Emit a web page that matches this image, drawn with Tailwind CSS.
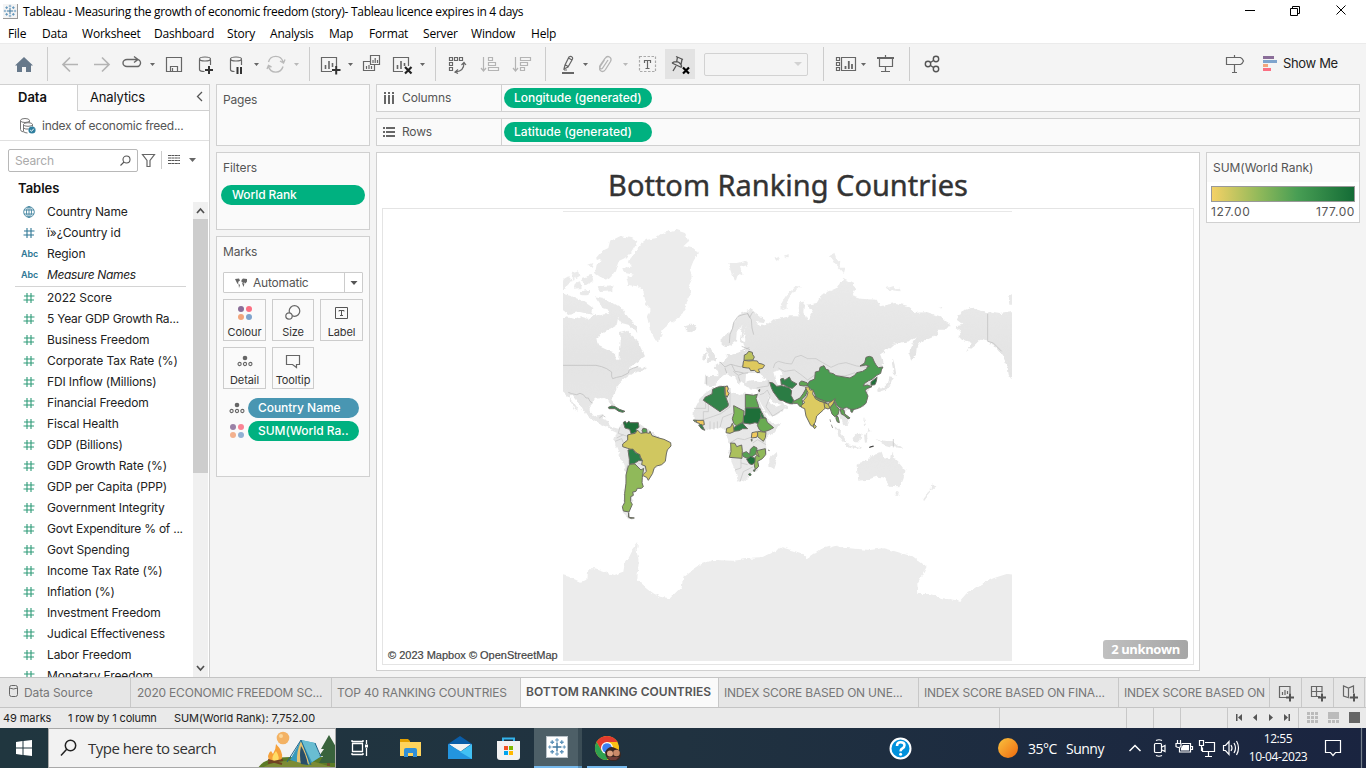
<!DOCTYPE html>
<html lang="en">
<head>
<meta charset="utf-8">
<title>Tableau</title>
<script src="https://cdn.jsdelivr.net/npm/@tailwindcss/browser@4"></script>
</head>
<body class="w-[1366px] h-[768px] overflow-hidden bg-[#f4f4f4] font-['Inter',sans-serif] text-[12px] text-[#333] flex flex-col whitespace-nowrap">
<svg class="hidden">
  <symbol id="hash" viewBox="0 0 12 12"><path d="M4 1v10M8 1v10M1 4h10.500M.5 8h10.500" fill="none" stroke="currentColor" stroke-width="1.100"/></symbol>
  <symbol id="globe" viewBox="0 0 12 12"><g fill="none" stroke="currentColor" stroke-width=".8"><circle cx="6" cy="6" r="5.300"/><ellipse cx="6" cy="6" rx="2.500" ry="5.300"/><path d="M6 .7v10.600M1 4h10M1 8h10"/></g></symbol>
  <symbol id="tab" viewBox="0 0 18 18"><path d="M9 5v8M5 9h8" stroke="#3f78a0" stroke-width="1.300"/><path d="M9 1v3.500M7.300 2.700h3.400M9 13.500V17M7.300 15.300h3.400M1 9h3M2.500 7.500v3M14 9h3M15.500 7.500v3" stroke="#5e93ba" stroke-width=".9"/><path d="M4.700 3v3.400M3 4.700h3.400M13.300 3v3.400M11.600 4.700H15M4.700 11.600V15M3 13.300h3.400M13.300 11.600V15M11.600 13.300H15" stroke="#5e93ba" stroke-width="1.200"/></symbol>
  <symbol id="dots4" viewBox="0 0 16 16"><circle cx="4" cy="4" r="3" fill="#8a6d98"/><circle cx="12" cy="4" r="3" fill="#fb6f82"/><circle cx="4" cy="12" r="3" fill="#f2a57c"/><circle cx="12" cy="12" r="3" fill="#7fa4cd"/></symbol>
  <symbol id="detail" viewBox="0 0 16 12"><circle cx="8" cy="3" r="2.300" fill="#666"/><g fill="none" stroke="#666" stroke-width="1.100"><circle cx="2.600" cy="9" r="1.600"/><circle cx="8" cy="9" r="1.600"/><circle cx="13.400" cy="9" r="1.600"/></g></symbol>
</svg>

<!-- title bar -->
<header class="h-[22px] bg-white flex items-center pl-[3px] text-black font-['Open_Sans',sans-serif]">
  <div class="size-[15px] mt-px bg-[#f4f4f4] border-r border-b border-[#999]"><svg class="size-[14px]"><use href="#tab"/></svg></div>
  <div class="pl-[5px] pt-[2px] tracking-[-0.3px]">Tableau - Measuring the growth of economic freedom (story)- Tableau licence expires in 4 days</div>
  <svg class="ml-auto w-[140px] h-[22px]" viewBox="1226 0 140 22" fill="none" stroke="#000"><path d="M1245 10.500h10M1290.500 8.500h7v7h-7zM1292.500 8V6.500h7v7H1298M1336.500 5.500l9 9M1345.500 5.500l-9 9"/></svg>
</header>
<nav class="h-[21px] bg-white flex items-center text-black font-['Open_Sans',sans-serif] tracking-[-0.2px] pl-2 pt-[2px]">
  <span class="w-[34px]">File</span><span class="w-10">Data</span><span class="w-[72px]">Worksheet</span><span class="w-[73px]">Dashboard</span><span class="w-[43px]">Story</span><span class="w-[59px]">Analysis</span><span class="w-10">Map</span><span class="w-[54px]">Format</span><span class="w-12">Server</span><span class="w-[60px]">Window</span><span>Help</span>
</nav>

<!-- toolbar -->
<div class="h-[41px] border-t border-[#ebebeb] flex items-center text-[#666]">
  <svg class="w-[47px] h-10 shrink-0" viewBox="0 44 47 40"><path d="M15 65.500l9-8.500 9 8.500h-2V72h-5v-5h-4v5h-5v-6.500z" fill="#66788a"/></svg>
  <div class="w-px h-[34px] bg-[#ccc]"></div>
  <svg class="w-[261px] h-10 shrink-0" viewBox="48 44 261 40" fill="none" stroke="currentColor" stroke-width="1.200">
    <path stroke="#b4b4b4" stroke-width="1.700" d="M78 64.500H63M70 57.500l-7 7 7 7M94 64.500h15M102 57.500l7 7-7 7"/>
    <path stroke-width="1.400" d="M133 59.500h-6a4 3.500 0 0 0 0 7h9.500a3.500 3.500 0 0 0 1-7H133M134 56.500l4 3-4 3"/>
    <path d="M166.500 57.500h15v14h-15zM170.500 71v-4.500h7V71M172.500 71v-3"/>
    <path d="M199.500 59.500v10q0 2 5 2M210.500 60v5"/><ellipse cx="205" cy="59" rx="5.500" ry="2"/><path stroke="#333" stroke-width="2" d="M205 70h8M209 66v8"/>
    <path d="M230.500 59.500v10q0 2 4 2M241.500 60v5"/><ellipse cx="236" cy="59" rx="5.500" ry="2"/><path stroke="#333" stroke-width="2" d="M237.500 67v7M241 67v7"/>
    <g stroke="#b9b9b9" stroke-width="1.400"><path d="M268.500 62a7.500 7.500 0 0 1 14.500 0M283 66.500a7.500 7.500 0 0 1-14.500 0M280 61l3.500 2 1.500-3.500M271.500 67l-3-1.500-1.500 3.500"/></g>
    <g stroke="none"><path fill="#666" d="M150 63h5l-2.500 3zM254 63h5l-2.500 3z"/><path fill="#b9b9b9" d="M294 63h5l-2.500 3z"/></g>
  </svg>
  <div class="w-px h-[34px] bg-[#ccc]"></div>
  <svg class="w-[125px] h-10 shrink-0" viewBox="310 44 125 40" fill="none" stroke="currentColor" stroke-width="1.200">
    <path d="M332 71.500h-10.500v-14h15V66"/><path stroke-width="1.600" d="M325.500 69v-4M329 69v-8M332.500 67v-4"/><path stroke="#333" stroke-width="2" d="M332 70h8.500M336.200 66v8.500"/>
    <path d="M370.500 55.500h9v9h-9zM370 61.500h-6.500v9h11V65M373 63v-3M375.200 63v-5M377.500 63v-3M366.500 69v-3M369 69v-4M371.500 69v-3"/>
    <path d="M403 71.500h-9.500v-14h15V66"/><path stroke-width="1.600" d="M397.500 69v-4M401 69v-8M404.500 66v-3"/><path stroke="#222" stroke-width="2.200" d="M405 67l6.500 6.500M411.500 67l-6.500 6.500"/>
    <path stroke="none" fill="#666" d="M348 63h5l-2.500 3zM420 63h5l-2.500 3z"/>
  </svg>
  <div class="w-px h-[34px] bg-[#ccc]"></div>
  <svg class="w-[109px] h-10 shrink-0" viewBox="436 44 109 40" fill="none" stroke="currentColor" stroke-width="1.200">
    <path d="M449.500 57.500h3v3h-3zM454.500 57.500h3v3h-3zM459.500 57.500h3v3h-3zM449.500 62.500h3v3h-3zM449.500 67.500h3v3h-3zM464 63q0 8-8 9M461.500 65l2.500-2.500 2 2.500M458 69.500l-3 2.500 3 1.500"/>
    <g stroke="#b4b4b4"><path d="M483.500 57v13M481 68l2.500 3 2.500-3M488.500 57.500h4v3h-4zM488.500 62.500h7v3h-7zM488.500 67.500h10v3h-10zM515.500 57v13M513 68l2.500 3 2.500-3M520.500 57.500h10v3h-10zM520.500 62.500h7v3h-7zM520.500 67.500h4v3h-4z"/></g>
  </svg>
  <div class="w-px h-[34px] bg-[#ccc]"></div>
  <svg class="w-[119px] h-10 shrink-0" viewBox="546 44 119 40" fill="none" stroke="currentColor" stroke-width="1.200">
    <path d="M564 69l1-4L569 57q2-1.500 3.500.5.500 1-.5 2.500L568 67zM565 64.500l3 2M568.500 58l3.500 2M564 70h3"/><path stroke-width="2" d="M562 73h12"/>
    <path stroke="#b4b4b4" stroke-width="1.300" d="M608 60l-5 7.500q-1 2-2.500 1t-.5-3l5-7q2-3 4.500-1.500t1 4.500l-5 8q-2 3-4.500 1.500t-.5-5l4-6"/>
    <g stroke="none"><path fill="#666" d="M583 63h5l-2.500 3z"/><path fill="#b9b9b9" d="M623 63h5l-2.500 3z"/></g>
    <path stroke="#aaa" stroke-dasharray="2.500 1.500" d="M639.500 56.500h16v15h-16z"/><path d="M644.500 63v-2.500h6V63M647.500 60.500v8M645.500 68.500h4"/>
  </svg>
  <div class="w-[30px] h-[30px] bg-[#e3e3e3]"><svg class="w-[30px] h-[30px]" viewBox="665 49 30 30" fill="none" stroke="#555" stroke-width="1.300"><path d="M676 56.500l7 3M677.500 57l-1 5.500M682 59.500l-1 5M672 63q4-2.500 7-.5t2.500 5M672 63l9.500 4.500M676 66l-3 5"/><path stroke="#000" stroke-width="2.200" d="M683 67.500l6 6M689 67.500l-6 6"/></svg></div>
  <div class="ml-[9px] w-[104px] h-[23px] border border-[#d2d2d2] rounded-[2px] flex items-center justify-end pr-[5px]"><svg class="w-2 h-2" viewBox="0 0 8 8"><path d="M0 2h8L4 6z" fill="#d2d2d2"/></svg></div>
  <div class="ml-[15px] w-px h-[34px] bg-[#ccc]"></div>
  <svg class="w-[85px] h-10 shrink-0" viewBox="824 44 85 40" fill="none" stroke="currentColor" stroke-width="1.200">
    <path d="M836.500 57.500h3v3h-3zM836.500 62.500h3v3h-3zM836.500 67.500h3v3h-3zM841.500 57.500h14v13h-14z"/><path stroke-width="1.800" d="M845.500 69v-3M848.800 69v-8M852 69v-5"/><path stroke="none" fill="#666" d="M861 63h5l-2.500 3z"/>
    <path d="M879.500 58v8.500h13V58M885.500 66v5M881 71.500h9M885.500 55v3"/><path stroke-width="2" d="M877 58h17"/>
  </svg>
  <div class="w-px h-[34px] bg-[#ccc]"></div>
  <svg class="w-[50px] h-10 shrink-0" viewBox="910 44 50 40" fill="none" stroke="#555" stroke-width="1.400"><circle cx="928" cy="64" r="2.700"/><circle cx="936" cy="59" r="2.700"/><circle cx="936" cy="69" r="2.700"/><path d="M930.500 62.500l3-2M930.500 65.500l3 2"/></svg>
  <svg class="ml-auto w-[58px] h-10 shrink-0" viewBox="1225 44 58 40" fill="none" stroke="#666" stroke-width="1.200"><path d="M1226.500 57.500h14q2 1 3 3.500-1 2.500-3 3.500h-14zM1234.500 55v2M1234.500 65v7M1232 72.500h5"/><g stroke="none"><path fill="#8a6d98" d="M1263 56h11v3h-11z"/><path fill="#7fa4cd" d="M1263 60h14v3h-14z"/><path fill="#f2a57c" d="M1263 64h5v3h-5z"/><path fill="#fb6f82" d="M1263 68h8v3h-8z"/></g></svg>
  <span class="w-[83px] text-[13px] text-[#222] tracking-[-0.35px]">Show Me</span>
</div>

<!-- workspace -->
<main class="h-[593px] flex overflow-hidden">
  <!-- data pane -->
  <aside class="w-[210px] shrink-0 bg-white border-t border-r border-[#d0d0d0] flex flex-col overflow-hidden">
    <div class="flex h-[26px] shrink-0 text-[13px] text-[#111]">
      <div class="w-[77px] pl-[18px] pt-[3px] font-semibold">Data</div>
      <div class="flex-1 border-l border-b border-[#d0d0d0] bg-[#fafafa] pl-3 pt-[3px] flex justify-between tracking-[-0.15px]">Analytics<svg class="w-2 h-[14px] mr-[6px] mt-[1px]" viewBox="0 0 8 14"><path d="M7 3L2.500 7.500 7 12" fill="none" stroke="#555" stroke-width="1.300"/></svg></div>
    </div>
    <div class="h-[30px] shrink-0 border-b border-[#e0e0e0] flex items-center pl-[19px] text-[#555] tracking-[-0.27px]">
      <svg class="w-[18px] h-[18px] mr-[5px]" viewBox="0 0 18 18" fill="none" stroke="#777"><ellipse cx="6" cy="3.500" rx="4.500" ry="2"/><path d="M1.500 3.500v9q0 2 3 2.500M10.500 3.500v2"/><ellipse cx="9" cy="7.500" rx="4.500" ry="1.800"/><path d="M4.500 7.500V14q0 2 4 2M13.500 7.500v2M4.500 11q2 1.500 5 1"/><circle cx="13" cy="13" r="3.600" fill="#2f7f9f" stroke="none"/><path stroke="#fff" d="M11.200 13l1.300 1.300 2.300-2.600"/></svg>
      index of economic freed...
    </div>
    <div class="flex items-center h-[23px] mt-2 shrink-0 pl-2">
      <div class="w-[130px] h-[23px] border border-[#b8b8b8] rounded-[2px] flex items-center justify-between pl-[6px] pr-[6px] text-[#aaa] tracking-[-0.15px]">Search<svg class="w-[11px] h-[11px]" viewBox="0 0 11 11" fill="none" stroke="#555" stroke-width="1.100"><circle cx="6.500" cy="4.500" r="3.500"/><path d="M4 7L.5 10.500"/></svg></div>
      <svg class="w-[64px] h-[23px]" viewBox="138 149 64 23" fill="none" stroke="#666"><path d="M142.500 154.500h12l-4.500 6v6h-3v-6z" stroke-width="1.200"/><path stroke="#ccc" d="M161.500 151v18"/><path stroke="#555" stroke-dasharray="3 .4" d="M168 155.500h12M168 158h12M168 160.500h12M168 163.500h12"/><path fill="#666" stroke="none" d="M189 158h7l-3.500 4z"/></svg>
    </div>
    <div class="h-[29px] shrink-0 pl-[18px] pt-[7px] text-[13px] font-semibold text-[#111]">Tables</div>
    <div class="flex flex-1 overflow-hidden">
      <div id="fields" class="w-[193px] shrink-0 text-[#222] tracking-[-0.12px]"></div>
      <div class="w-[15px] mt-px bg-[#f0f0f0] flex flex-col items-center">
        <svg class="w-[15px] h-[17px] shrink-0" viewBox="0 0 15 17"><path d="M4 11l3.500-4 3.500 4" fill="none" stroke="#505050" stroke-width="1.700"/></svg>
        <div class="w-[15px] h-[254px] shrink-0 bg-[#cdcdcd]"></div>
        <svg class="w-[15px] h-[17px] mt-auto" viewBox="0 0 15 17"><path d="M4 6l3.500 4L11 6" fill="none" stroke="#505050" stroke-width="1.700"/></svg>
      </div>
    </div>
  </aside>

  <!-- cards -->
  <section class="w-[154px] ml-[6px] shrink-0 flex flex-col gap-[6px] text-[#555]">
    <div class="h-[62px] border border-[#d0d0d0] bg-[#fafafa] pl-[6px] pt-[6px] tracking-[-0.2px]">Pages</div>
    <div class="h-[78px] border border-[#d0d0d0] bg-[#fafafa] pt-[6px]"><div class="pl-[6px] tracking-[-0.1px]">Filters</div><div class="ml-1 mt-[8px] w-[144px] h-5 rounded-full bg-[#00b180] text-white pl-[11px] leading-5 font-medium tracking-[-0.1px]">World Rank</div></div>
    <div class="h-[241px] border border-[#d0d0d0] bg-[#fafafa] pt-[6px] px-[6px]">
      <div class="tracking-[-0.2px]">Marks</div>
      <div class="mt-[11px] w-[140px] h-[21px] border border-[#ccc] rounded-[1px] bg-white flex items-center tracking-[-0.2px]"><svg class="ml-[10px] w-[14px] h-3 mr-[5px]" viewBox="0 0 14 12"><path d="M1 2l4-.5 1 2-2 1.500.5 1-1 1zM4.500 6.500L6 8l-1 3zM7.500 3l1.500-1.500L13 2v2.500l-1.500 2-1-1-1 .5-2-1zM8 6l2.500.5L9.500 10z" fill="#666"/></svg><span class="flex-1">Automatic</span><span class="w-[18px] h-full border-l border-[#ccc] flex items-center justify-center"><svg class="w-2 h-2" viewBox="0 0 8 8"><path d="M.5 2h7L4 6z" fill="#555"/></svg></span></div>
      <div class="mt-[6px] grid grid-cols-[43px_42px_43px] gap-x-[6px] gap-y-[6px] text-[11px] text-[#333] tracking-[-0.1px]">
        <div class="h-[42px] border border-[#ccc] flex flex-col items-center justify-between pt-[5px]"><svg class="size-4"><use href="#dots4"/></svg>Colour</div>
        <div class="h-[42px] border border-[#ccc] flex flex-col items-center justify-between pt-[5px]"><svg class="size-4" viewBox="0 0 16 16" fill="#fafafa" stroke="#666" stroke-width="1.200"><circle cx="9.500" cy="6" r="5.300"/><circle cx="4" cy="11" r="3.200"/></svg>Size</div>
        <div class="h-[42px] border border-[#ccc] flex flex-col items-center justify-between pt-[5px]"><svg class="size-4" viewBox="0 0 16 16" fill="none" stroke="#555"><path d="M1.500 2.500h12v11h-12zM5 6.500v-1h5v1M7.500 5.500v5M6 10.500h3"/></svg>Label</div>
        <div class="h-[42px] border border-[#ccc] flex flex-col items-center justify-between pt-[7px]"><svg class="w-4 h-3"><use href="#detail"/></svg>Detail</div>
        <div class="h-[42px] border border-[#ccc] flex flex-col items-center justify-between pt-[5px]"><svg class="size-4" viewBox="0 0 16 16" fill="none" stroke="#666" stroke-width="1.200"><path d="M1.500 2.500h13v9h-3v3l-4-3h-6z"/></svg>Tooltip</div>
      </div>
      <div class="mt-[9px] flex items-center h-5"><svg class="w-4 h-3 ml-[6px] mr-[3px]"><use href="#detail"/></svg><div class="w-[111px] h-5 rounded-full bg-[#4996b2] text-white pl-[10px] leading-5 font-medium tracking-[-0.05px]">Country Name</div></div>
      <div class="mt-[3px] flex items-center h-5"><svg class="size-4 ml-[6px] mr-[3px] opacity-85"><use href="#dots4"/></svg><div class="w-[111px] h-5 rounded-full bg-[#00b180] text-white pl-[10px] leading-5 font-medium tracking-[-0.03px]">SUM(World Ra..</div></div>
    </div>
  </section>

  <!-- sheet -->
  <section class="ml-[6px] w-[984px] shrink-0 flex flex-col gap-[6px] text-[#555]">
    <div class="h-7 border border-[#d0d0d0] bg-[#fafafa] flex items-center"><svg class="w-3 h-3 ml-[6px] mr-[7px]" viewBox="0 0 12 12"><path d="M1 0h2v2H1zM5 0h2v2H5zM9 0h2v2H9zM1 3h2v9H1zM5 3h2v9H5zM9 3h2v9H9z" fill="#666"/></svg><span class="w-[99px] tracking-[-0.1px]">Columns</span><div class="h-full border-l border-[#d0d0d0] pl-[2px] flex items-center"><div class="w-[148px] h-5 rounded-full bg-[#00b180] text-white pl-[10px] leading-5 font-medium tracking-[-0.02px]">Longitude (generated)</div></div></div>
    <div class="h-7 border border-[#d0d0d0] bg-[#fafafa] flex items-center"><svg class="w-3 h-3 ml-[6px] mr-[7px]" viewBox="0 0 12 12"><path d="M0 1h2v2H0zM0 5h2v2H0zM0 9h2v2H0zM3 1h9v2H3zM3 5h9v2H3zM3 9h9v2H3z" fill="#666"/></svg><span class="w-[99px] tracking-[-0.2px]">Rows</span><div class="h-full border-l border-[#d0d0d0] pl-[2px] flex items-center"><div class="w-[148px] h-5 rounded-full bg-[#00b180] text-white pl-[10px] leading-5 font-medium tracking-[0.05px]">Latitude (generated)</div></div></div>
    <div class="flex gap-[6px] items-start">
      <div class="relative w-[824px] h-[519px] border border-[#d0d0d0] bg-white">
        <h1 class="h-[55px] pt-[10px] text-center text-[29px] leading-[44px] text-[#333] font-['Noto_Sans',sans-serif] [-webkit-text-stroke:0.4px_#333]">Bottom Ranking Countries</h1>
        <div class="ml-[5px] w-[812px] h-[457px] border border-[#e4e4e4]">
          <svg class="w-[810px] h-[455px]" viewBox="383 209 810 455">
            <defs>
              <clipPath id="frame"><path d="M563 211h449v450H563z"/></clipPath>
              <linearGradient id="relief" gradientUnits="userSpaceOnUse" x1="0" y1="200" x2="0" y2="800"><stop offset="0" stop-color="#ebebeb"/><stop offset=".4" stop-color="#e4e4e4"/><stop offset="1" stop-color="#e9e9e9"/></linearGradient>
              <filter id="rough" x="-5%" y="-5%" width="110%" height="110%"><feTurbulence type="fractalNoise" baseFrequency=".18" numOctaves="3" seed="4"/><feDisplacementMap in="SourceGraphic" scale="4.500" xChannelSelector="R" yChannelSelector="G"/></filter>
            </defs>
            <path d="M563 211.500h449" stroke="#e8e8e8"/>
            <g clip-path="url(#frame)">
            <!-- unshaded land -->
            <g filter="url(#rough)"><g transform="translate(560 208) scale(.33333)" fill="url(#relief)">
              <path d="M0 335L20 325 40 335 60 325 85 332 105 318 120 322 140 318 150 295 165 310 175 320 170 350 140 368 112 388 118 415 150 430 165 435 168 455 178 455 180 425 182 400 180 375 205 368 215 385 235 400 255 445 232 462 205 480 240 478 262 480 240 490 215 497 205 505 190 515 170 538 165 555 155 568 162 585 168 600 158 598 148 578 130 570 105 572 92 590 92 612 102 625 130 618 128 632 145 640 148 655 175 662 182 670 170 674 150 665 130 650 110 642 75 618 60 590 35 560 28 568 55 608 45 603 22 565 0 545z"/>
              <path fill="#ececec" d="M240 110L262 95 290 90 310 75 345 65 375 75 388 98 370 115 395 120 418 130 400 160 392 180 398 210 388 230 392 260 375 290 380 305 350 330 325 350 308 365 298 400 285 395 270 365 262 330 272 305 258 290 250 250 230 235 205 230 200 210 222 200 195 195 190 180 215 175 205 160 225 135z"/>
              <path d="M150 100L180 85 215 90 232 100 215 130 195 150 175 160 165 190 150 210 135 215 105 195 110 170 125 160 108 150 125 130 145 120zM105 265L130 270 160 285 185 300 210 335 228 350 232 375 205 350 185 345 160 310 130 300zM0 255L35 265 70 280 100 300 95 320 60 312 25 318 0 300zM0 220L25 205 35 215 20 235 0 245zM35 195L55 190 58 205 40 215zM65 210L95 200 100 220 75 235zM45 225L60 220 65 240 40 242zM110 235L160 232 160 250 120 252zM85 170L100 165 95 180zM60 250L90 245 85 262 65 262zM120 365L145 350 150 365 130 375z"/>
              <path d="M375 355L390 350 410 352 408 365 390 373 378 365zM505 165L530 165 560 158 560 172 540 178 548 200 535 195 527 220 515 195zM640 152l15-6 5 8-15 6zM672 145l14-7v10zM440 420L452 415 455 430 468 445 468 460 440 462 448 445 438 430zM428 440L440 435 438 455 427 458z"/>
              <path d="M485 410L485 390 510 370 525 335 545 312 575 305 600 325 615 335 610 345 590 342 600 355 620 350 640 335 690 325 715 325 718 280 735 278 730 310 742 340 758 310 742 290 770 285 785 260 830 240 850 210 880 225 888 240 875 265 900 272 950 275 960 295 1005 285 1050 295 1060 315 1100 312 1140 325 1155 340 1172 350 1160 365 1130 365 1135 380 1100 395 1085 400 1070 420 1068 440 1055 458 1048 440 1050 420 1062 400 1070 388 1045 400 1000 408 975 430 962 438 970 460 965 490 948 515 945 530 935 530 920 560 910 595 875 605 850 605 870 630 865 650 848 652 838 625 822 612 800 590 765 600 730 585 690 592 672 575 650 562 665 581 685 596 650 621 627 626 605 590 590 560 595 545 560 540 545 520 535 530 520 505 500 495 480 510 470 525 455 537 433 530 435 503 475 505 475 490 460 478 485 462 500 450 500 440 505 435 515 440 540 432 555 425 550 405 565 400 550 405 540 398 545 355 530 375 528 400 512 412 500 420z"/>
              <path d="M435 556L465 536 500 531 508 546 530 561 550 556 590 561 605 596 620 626 640 650 660 645 645 670 620 691 618 706 620 731 600 756 595 781 580 791 565 811 535 821 525 786 508 746 510 706 498 681 495 666 480 658 435 666 415 651 400 636 402 601 415 576z"/>
              <path d="M628 750L650 730 652 742 640 780 628 776zM190 643L235 644 262 664 290 684 330 704 315 751 310 768 285 781 265 816 250 804 248 836 225 846 215 886 207 911 205 926 222 931 205 934 188 916 192 866 198 790 180 745 162 700 170 676 178 656z"/>
              <path fill="#ececec" d="M662 308Q655 270 718 230L722 235Q675 270 680 300zM810 145l14-8 8 22 12 2-2 18 14 0-4 16-14-16-12-12-6-10zM980 240l18-6 8 10 14-2 2 8-38-4zM1135 297l10-2 2 6-10 0zM672 150l8-4 3 5z"/>
              <path d="M1187 355L1210 350 1190 335 1205 310 1230 300 1280 312 1320 318 1370 310 1370 540 1346 500 1342 470 1325 440 1300 410 1280 400 1260 395 1240 415 1218 432 1235 405 1210 400 1195 385 1205 370zM1345 265l25-15v40h-22z"/>
              <path d="M998 450l6 20 6 35-8-8-6-30zM998 510l-8 22-10 12-25 8-8-6 25-8 12-12 4-18zM878 690l15-16 12 6-5 20-20 0zM825 655l15 15 20 30-6 5-18-22zM855 707l50 10-2 5-48-8zM912 680l15-4-6 10 4 14-10 2zM950 694l22 4 28 2 28 22-30-6-30-8zM910 630l8 22-6-2zM925 660l10 10-12 2z"/>
              <path d="M890 771L892 796 895 818 920 816 950 806 970 808 990 836 1018 838 1030 811 1037 786 1020 766 1005 751 995 731 990 751 970 746 965 731 940 738 925 756 895 766zM1006 850l12 0-4 14-6-2zM1117 826l10 12-14 10-10 12-14 20-2-6 14-18 14-14z"/>
              <path fill="#ececec" d="M0 1100L30 1108 60 1121 82 1116 85 1081 105 1081 130 1089 160 1101 190 1091 195 1061 205 1046 215 1026 235 1001 230 1026 236 1061 232 1116 280 1156 300 1166 330 1171 365 1136 370 1106 390 1091 425 1068 460 1056 520 1058 560 1053 600 1051 640 1031 665 1018 700 1028 725 1036 740 1051 780 1024 825 1011 850 1019 930 1026 970 1021 1010 1031 1060 1046 1100 1076 1090 1096 1072 1126 1075 1158 1110 1158 1150 1171 1200 1178 1220 1156 1250 1136 1300 1111 1340 1098 1370 1101 1370 1380 0 1380z"/>
              <g fill="#fff"><path d="M558 498l25-4 25 10 15 12-20 4-25-4-22 6zM640 492l20-6 10 12-10 6 6 22-12 8-8-20zM560 350l-8 30 5 20-12-4zM625 566l20 20 20 4-16 6-20-14z"/></g>
            </g></g>
            <!-- borders of unshaded countries -->
            <g transform="translate(560 208) scale(.33333)" fill="none" stroke="#c6c6c6" stroke-width="2.200" stroke-linejoin="round">
              <path stroke="#bdbdbd" d="M9 472H108L125 476 140 482 155 492 155 505 158 512 170 508 185 505 205 495 208 485 222 480 235 475M25 553L35 557 50 560 60 556 70 560 78 570 85 570 90 580 97 585M1283 317V400L1300 405 1310 415 1325 430M118 630l10-8 8 5M508 405l2-25 8-20 4-18 12-17 15-5 14-3 6 12 6-12 5-5M562 315l12 20 2 25 5 20M480 462l10 10 5 5 12-6 6-2 14 4 16 4 8-8M495 480l5 15M515 470l6 12 4 8 12 2 13 3M520 490l15 12 14-6 16-2M535 505l5 15M440 505v25M545 415l25 10M550 425l18-6"/>
              <path d="M640 480l5-14 10-6 22 6 18 2 10-20 18-6 20 10 25 0 20 12 25 14 22-10 23-4 32 10 33 4M655 480l18 10 30-4 20 14 20 16 20-14 30 4M785 480l15 14 20 8 35 2 30-10M590 540l20-4 15-2 0-18M600 560l12-4 10-10 8 16M630 566l-12 30 20 28 32-20M402 601h35v-28M430 636v-25h15v-35M415 640l45-15 22-8 28-20M510 540v57M450 665v-25M462 665v-22M472 662v-22M480 658l8-30 30-12M508 706l25-15 20 4 25-9M525 786l18-6 0-36M543 765l20 5M578 705l15-10 25 15M540 821l10-30 30-15M170 690l20-10M165 700l20-8 5 12M180 656l-5 20 30 10M198 790l5-20M232 764l20 8 8 18-8 8M1000 693v25"/>
            </g>
            <!-- shaded countries -->
            <g transform="translate(690 340) scale(.33333)" stroke="#6b6b63" stroke-width="3" stroke-linejoin="round">
              <path fill="#33834a" d="M40 181L45 172 66 162 68 148 84 141 103 139 105 165 115 192 114 199 90 215z"/>
              <path fill="#f0c95e" d="M105 140l7-2 3 9-3 6 5 8-6 11-5-9z"/>
              <path fill="#60a553" d="M166 163L190 166 202 163 198 176 205 196 206 203H166z"/>
              <path fill="#1e6f39" d="M166 204H209L216 220 211 237 206 251 195 248 180 252 160 249 159 232 165 225z"/>
              <path fill="#247a40" d="M211 221l5-3 5 12 8 6-14-1z"/>
              <path fill="#69ab52" d="M211 235L227 234 232 247 251 263 236 271 220 276 208 269 202 256z"/>
              <path fill="#7ab455" d="M131 197L162 213 159 246 140 258 131 250 127 236 132 220z"/>
              <path fill="#2b7c44" d="M130 264L142 256 158 248 162 255 173 266 158 266 147 272 132 274z"/>
              <path fill="#c3c25c" d="M108 278L110 265 122 261 127 250 131 260 132 275 120 280z"/>
              <path fill="#f0c95e" d="M186 278l14-3 4 7-4 10-16 2z"/>
              <path fill="#bcc45c" d="M203 274L228 277 226 293 220 304 203 290z"/>
              <path fill="#abc05c" d="M122 309L135 310 140 320 155 315 157 332 156 355 118 352 123 335z"/>
              <path fill="#55a052" d="M157 340l12-5 10 8 2-15 10-9 10 5-2 17-14 10-14 4-12-6z"/>
              <path fill="#90b95a" d="M200 332l26-6 1 18-10 12-14 8 3 15-10 10-4-18 4-20 8-8z"/>
              <path fill="#d6cc60" d="M199 330l4 10 5 10-5-2-5-8z"/>
              <path fill="#1e6f39" d="M170 358l12-9 13 6 0 12-9 7-8-3z"/>
              <path fill="#33834a" stroke-width="2.500" d="M175 403l5-3 4 4-4 4zM190 390l5-1 0 5-4 0zM183 298l4 1-2 5zM234 330l5 2"/>
              <path fill="#7ab455" d="M10 240l12 1-8 4z"/>
              <path fill="#f0c95e" d="M17 246l6-5h18l2 13-8 2-8-6z"/>
              <path fill="#33834a" d="M26 255l8-2 5 8 5 10-10-5z"/>
              <path fill="#bdc35e" d="M163 45L170 42 176 34 187 37 188 44 193 51 189 60 162 61z"/>
              <path fill="#dfc95e" d="M160 66L162 61 176 63 189 62 202 63 206 70 216 72 224 76 218 85 205 88 209 97 201 98 194 91 182 92 178 84 172 84 158 82z"/>
              <path fill="#2b7c44" d="M239 127L249 129 260 139 275 137 296 143 305 152 303 166 313 185 307 192 290 188 279 182 268 180 250 156 244 143z"/>
              <path fill="#33834a" d="M272 117l8-2 4 6 14-10 6 12 17 9-14 13-10-2-18-10-5 1z"/>
              <path fill="#60a553" d="M328 129l6-6 8 2 10 4 4 7-14 2-13-2z"/>
              <path fill="#60a553" d="M307 186L330 174 340 160 350 142 354 150 346 168 336 178 340 196 330 200 322 190 310 190z"/>
              <path fill="#4a9c51" d="M352 136L358 124 374 117 376 96 388 93 390 82 402 77 408 88 416 90 418 98 430 101 438 107 480 114 494 106 500 98 518 94 530 86 532 80 538 79 528 75 510 78 524 69 528 52 538 49 547 52 553 66 560 78 566 83 579 81 574 90 572 100 560 106 546 118 536 122 524 130 520 138 532 135 546 140 530 146 526 152 534 168 528 190 512 202 500 206 486 210 470 202 458 206 444 200 438 190 436 184 410 186 394 180 378 172 372 156 362 146z"/>
              <path fill="#1e6f39" d="M543 126l18-14-2 12-4 10-12 2z"/>
              <path fill="#dccb61" d="M334 196L344 188 340 182 350 170 354 158 346 142 356 140 360 150 370 150 368 162 376 174 392 184 408 188 412 196 416 190 436 176 430 190 420 204 408 202 400 210 380 228 376 246 368 259 362 256 348 228 344 206 334 202z"/>
              <path fill="#7ab455" d="M374 168l10 8 24 8v4l-18-4-14-8z"/>
              <path fill="#c9c65e" d="M402 188l12 4 6 12-6 3-10-4zM372 252l7 8-5 6-4-5z"/>
              <path fill="#60a553" d="M420 204L434 186 440 200 448 208 444 224 434 230 426 222zM438 228l6 2 4 18-6-2-4-10zM450 206l12 4 2 12 16 12-6 2-12-10-8-4z"/>
              <path fill="#4a9c51" d="M482 209l9-2-4 10-4-1z"/>
              <path fill="#333" stroke-width="2" d="M205 151l5-3-2 8zM420 238l2 8M424 254l4 10M538 322l14-3"/>
            </g>
            <g transform="translate(560 390) scale(.33333)" stroke="#6b6b63" stroke-width="3" stroke-linejoin="round">
              <path fill="#33834a" d="M145 52L155 48 165 50 178 58 195 64 188 67 176 64 165 56 147 56z"/>
              <path fill="#1e6f39" d="M190 97L196 94 200 100 206 94 212 98 235 98 237 112 228 118 230 125 214 133 209 118 195 114z"/>
              <path fill="#55a052" d="M246 122l3-7 11 2 1 10-11 4z"/>
              <path fill="#90b95a" d="M205 228L212 222 225 222 243 240 251 235 247 262 246 278 250 290 244 295 232 295 228 304 218 306 220 316 212 320 212 335 217 343 207 366 190 363 187 350 194 338 194 310 198 280 198 255z"/>
              <path fill="#d0c760" d="M203 135L214 132 226 130 232 120 242 130 258 128 268 130 270 124 276 137 300 145 312 148 332 158 333 168 322 180 319 192 316 214 305 224 290 228 282 235 278 250 265 271 260 262 247 256 259 244 256 228 245 224 247 212 240 198 220 180 203 175 188 170 188 162 203 150z"/>
              <path fill="#2b7f48" d="M204 180L218 177 226 188 240 194 240 202 247 212 236 212 224 220 208 223 208 208z"/>
              <path fill="#90b95a" d="M206 368l1 14 16 2-12 1-6-4z"/>
              <path fill="none" stroke="#333" d="M928 172l12-4"/>
            </g>
            </g>
          </svg>
        </div>
        <div class="absolute left-[8px] bottom-[7px] px-[3px] bg-white/60 text-[11px] font-medium text-[#444] font-['Liberation_Sans',sans-serif] tracking-[0px] [-webkit-text-stroke:0.2px_#444]">© 2023 Mapbox © OpenStreetMap</div>
        <div class="absolute right-[11px] bottom-[11px] w-[85px] h-[19px] rounded-[3px] bg-gradient-to-r from-[#c0c0c0] to-[#a6a6a6] text-white text-center leading-[18px] text-[13px] font-bold font-['Open_Sans',sans-serif] tracking-[-0.4px]">2 unknown</div>
      </div>
      <div class="w-[154px] h-[71px] border border-[#d0d0d0] bg-white">
        <div class="h-[29px] bg-[#fafafa] pl-[6px] pt-[6px] tracking-[-0.05px]">SUM(World Rank)</div>
        <div class="mx-1 mt-1 h-4 border border-[#999] bg-[linear-gradient(90deg,#f4d166,#91b95a_33%,#489e54_60%,#146c36)]"></div>
        <div class="mx-1 pt-px flex justify-between tracking-[0.6px]">
          <span>127.00</span><span>177.00</span>
        </div>
      </div>
    </div>
  </section>
</main>

<!-- sheet tabs -->
<div class="h-[31px] border-t border-b border-[#c4c4c4] bg-[#e6e6e6] flex text-[12px] text-[#777] leading-[29px] tracking-[-0.15px]">
  <div class="w-[131px] border-r border-[#c8c8c8] flex items-center tracking-[-0.1px]"><svg class="w-[9px] h-3 ml-[9px] mr-[6px] mb-[3px]" viewBox="0 0 9 12" fill="none" stroke="#666"><rect x=".5" y=".5" width="8" height="11" rx="2"/><path d="M.5 3q4 2 8 0"/></svg>Data Source</div>
  <div class="w-[201px] border-r border-[#c8c8c8] pl-[6px] tracking-[-0.21px]">2020 ECONOMIC FREEDOM SC...</div>
  <div class="w-[189px] border-r border-[#c8c8c8] pl-[5px]">TOP 40 RANKING COUNTRIES</div>
  <div class="w-[198px] border-r border-[#c8c8c8] bg-[#fafafa] pl-[5px] font-semibold text-[#555] leading-[27px] tracking-[0.04px]">BOTTOM RANKING COUNTRIES</div>
  <div class="w-[200px] border-r border-[#c8c8c8] pl-[5px] tracking-[-0.2px]">INDEX SCORE BASED ON UNE...</div>
  <div class="w-[200px] border-r border-[#c8c8c8] pl-[5px] tracking-[-0.2px]">INDEX SCORE BASED ON FINA...</div>
  <div class="w-[151px] border-r border-[#c8c8c8] pl-[5px] overflow-hidden tracking-[-0.2px]">INDEX SCORE BASED ON</div>
  <svg class="w-24 h-[29px] shrink-0" viewBox="1270 678 96 29" fill="none" stroke="#666" stroke-width="1.200"><path stroke="#c8c8c8" stroke-width="1" d="M1301.500 678v29M1333.500 678v29M1364.500 678v29"/><path d="M1288 697.500h-8.500v-11h10.500v7M1282.500 695v-3M1285 695v-5M1287.500 694v-3M1320 696.500h-8.500v-10h10.500v6M1311.500 691.500h10M1316.500 686.500v10M1349.500 698l-6-2v-10l5 2 5-2v7M1348.500 688v9"/><path stroke="#555" stroke-width="2" d="M1286 697.500h8M1290 693.500v8M1318 697.500h8M1322 693.500v8M1350 697.500h8M1354 693.500v8"/></svg>
</div>
<!-- status bar -->
<div class="h-5 bg-[#eaeaea] flex items-center pl-[3px] text-[11px] text-[#222] tracking-[-0.08px]">
  <span class="w-[65px]">49 marks</span><span class="w-[106px] tracking-[-0.17px]">1 row by 1 column</span><span>SUM(World Rank): 7,752.00</span>
  <svg class="ml-auto w-[376px] h-5" viewBox="990 708 376 20"><path stroke="#c8c8c8" d="M999.500 708v20M1126.500 708v20M1153.500 708v20M1180.500 708v20M1227.500 708v20M1298.500 708v20"/><path fill="#555" d="M1236 714h1.500v7H1236zM1242 714v7l-4-3.500zM1257 714v7l-4-3.500zM1269 714v7l4-3.500zM1284 714v7l4-3.500zM1288.500 714h1.500v7h-1.500z"/><path fill="#bbb" d="M1307 712h3v3h-3zM1311 712h3v3h-3zM1315 712h3v3h-3zM1307 716h3v3h-3zM1311 716h3v3h-3zM1315 716h3v3h-3zM1307 720h3v3h-3zM1311 720h3v3h-3zM1315 720h3v3h-3zM1328 712h11v7h-11zM1328 720h3v3h-3zM1332 720h3v3h-3zM1336 720h3v3h-3z"/><path fill="#666" d="M1349 712h11v11h-11z"/></svg>
</div>

<!-- taskbar -->
<footer class="h-10 bg-gradient-to-r from-[#20363f] via-[#203240] to-[#1a2440] flex items-center text-white font-['Open_Sans',sans-serif]">
  <svg class="w-12 h-10" viewBox="0 728 48 40"><path fill="#fff" d="M16 742l6.500-1v6.500H16zM23.500 741l8.500-1v7.500h-8.500zM16 748.500h6.500v6.500l-6.500-1zM23.500 748.500H32v7.500l-8.500-1z"/></svg>
  <div class="w-[288px] h-10 bg-[#f2f2f2] border border-[#a9a9a9] flex items-center text-[#333] text-[15px] overflow-hidden">
    <svg class="w-[18px] h-[18px] ml-[11px] mr-[10px]" viewBox="0 0 18 18" fill="none" stroke="#222" stroke-width="1.500"><circle cx="10.500" cy="6.500" r="5.200"/><path d="M6.700 10.300L1 16.500"/></svg><span class="w-[170px] tracking-[-0.52px]">Type here to search</span>
    <svg class="w-[77px] h-[38px] shrink-0" viewBox="258 729 77 38">
      <path d="M258 768Q264 757 290 757t45 0v11z" fill="#5c7b26"/><path d="M262 768Q275 758 315 762l20 6z" fill="#7c8b35"/>
      <circle cx="283" cy="738" r="6.300" fill="#f3b264"/><circle cx="281" cy="736" r="2" fill="#fbd79b"/>
      <path d="M276 744q7 7 6 14-2 5-7 5-7-1-7-7 1-4 3-5l2 3q3-5 3-10z" fill="#f6a13a"/><path d="M276 751q4 6 2 10h-5q-2-4 3-10z" fill="#ffdc65"/><path d="M268 763l15-3M268 760l14 4" stroke="#704423" stroke-width="2"/>
      <path d="M329 735l7 12v16h-17l4-7h-4l5-7h-3z" fill="#39633c"/><path d="M327 763h3v3h-3z" fill="#74502a"/>
      <path d="M290 760L301 740l14 3 5 14-12 8z" fill="#379abd"/><path d="M301 740l14 3 5 14-8 5z" fill="#69bdd1"/><path d="M301 741q-5 12-4 21l12 2q-3-13-8-23z" fill="#e6c372"/><path d="M301 746q-2 9 0 18l7 1q-2-11-7-19z" fill="#294e68"/><path d="M301 740l-14 22M301 740l10 25M315 743l6 14" stroke="#21678c" fill="none"/>
    </svg>
  </div>
  <svg class="w-[198px] h-10 shrink-0" viewBox="336 728 198 40">
    <path fill="none" stroke="#fff" stroke-width="1.300" d="M352 742v-2M363 742v-2M352.500 743.500h10v8h-10zM352 753v2M363 753v2M352 741.500h11M352 754.500h11M366.500 740v4M366.500 748v8"/><path fill="#fff" d="M365 744.500h3v3h-3z"/>
    <path fill="#e4a000" d="M400 739h8l2 2v5h-10z"/><path fill="#ffd35c" d="M400 742h21v14h-21z"/><path fill="#318fd8" d="M404 757v-7q0-2 2-2h9q2 0 2 2v7h-4v-4h-5v4z"/>
    <path fill="#0a5da8" d="M448 744l12-8 12 8v4h-24z"/><path fill="#f3f3f3" d="M449 744h22l-11 8z"/><path fill="#2395df" d="M448 744l24 14v1h-24z"/><path fill="#42c1f4" d="M472 744l-12 8 12 7z"/>
    <path d="M503 742v-3.500h11v3.500" fill="none" stroke="#33b3eb" stroke-width="2"/><path fill="#f2f2f2" d="M497 741h23v16q0 3-3 3h-17q-3 0-3-3z"/><path fill="#f25022" d="M504 746h4v4h-4z"/><path fill="#7fba00" d="M509 746h4v4h-4z"/><path fill="#00a4ef" d="M504 751h4v4h-4z"/><path fill="#ffb900" d="M509 751h4v4h-4z"/>
  </svg>
  <div class="w-11 h-10 bg-[#4d5f67] border-b-2 border-[#76b9ed] flex items-center justify-center"><div class="size-[22px] ml-[2px] mb-px bg-white border border-[#b9c2c8]"><svg class="size-5"><use href="#tab"/></svg></div></div>
  <div class="w-1 h-10 bg-[#3a4c55] border-b-2 border-[#5a93bd]"></div>
  <svg class="ml-[5px] w-10 h-10 shrink-0" viewBox="587 728 40 40"><path fill="#76b9ed" d="M587 766h40v2h-40z"/><circle cx="607" cy="748" r="12" fill="#fbc116"/><path fill="#e33b2e" d="M596.600 742a12 12 0 0 1 20.800 0H607l-5.200 9z"/><path fill="#2fa150" d="M596.600 742a12 12 0 0 0 10.400 18l5-9h-10.200z"/><circle cx="607" cy="748" r="6" fill="#fff"/><circle cx="607" cy="748" r="4.800" fill="#3c7ff0"/><path fill="#3b2721" d="M605 752q4-7 10-4 6 2 6 7-1 6-8 6t-8-9z"/><circle cx="610" cy="753.500" r="3" fill="#dba07f"/><circle cx="616.500" cy="753" r="3.300" fill="#c98968"/><path fill="#703d38" d="M607 757h12l-3 3h-6z"/></svg>
  <svg class="ml-[260px] w-7 h-7 shrink-0" viewBox="0 0 28 28"><circle cx="13.500" cy="14.500" r="10" fill="#0091dc" stroke="#fff" stroke-width="2"/><path d="M10 12q0-3.700 3.700-3.700t3.800 3q0 2-2 3t-1.800 3" fill="none" stroke="#fff" stroke-width="2.500"/><circle cx="13.600" cy="20.200" r="1.500" fill="#fff"/></svg>
  <div class="ml-[83px] size-5 rounded-full bg-gradient-to-br from-[#f7c23e] to-[#ee6708]"></div>
  <span class="ml-[10px] text-[14px] tracking-[-0.5px] w-[38px]">35°C</span><span class="text-[14px] tracking-[-0.5px]">Sunny</span>
  <svg class="ml-auto w-[118px] h-10 shrink-0" viewBox="1125 728 118 40" fill="none" stroke="#fff" stroke-width="1.200"><path stroke-width="1.500" d="M1129.500 751l5.500-5.500 5.500 5.500"/><path d="M1155.500 743.500h5q1 0 1 1v7q0 1-1 1h-5q-1 0-1-1v-7q0-1 1-1zM1162 747l3-1.500v6l-3-1.500M1156 740.500q3-1.500 6 0M1156 755.500q3 1.500 6 0"/><path d="M1182 743.500h8.500v8.500h-11v-4M1191 746.500h1.500v3h-1.500M1176 743.500h5v3q-2.500 2-5 0zM1177.500 743v-3M1180.500 743v-3"/><path fill="#fff" stroke="none" d="M1183 745h6v5.500h-8v-2.500z"/><path d="M1205 742.500h9.500v9h-12v-4M1208.500 752v4M1205 756.500h7M1199.500 740.500h4v5h-4zM1201.500 746v5"/><path d="M1223.500 745.500h2l3.500-4v13l-3.500-4h-2zM1231 745q2 3 0 6M1234 743q3 5 0 10M1236.500 741q4 7 0 14"/></svg>
  <div class="w-[70px] text-[12px] leading-[18px] text-center tracking-[-0.4px]"><div>12:55</div><div>10-04-2023</div></div>
  <svg class="w-[53px] h-10 shrink-0" viewBox="1313 728 53 40" fill="none" stroke="#fff" stroke-width="1.200"><path d="M1325.500 740.500h15v12h-5l-2.500 3-2.500-3h-5z"/><path stroke="#75808c" d="M1361.500 728v40"/></svg>
</footer>

<script>
  const dims = [["globe","Country Name"],["hash","ï»¿Country id"],["abc","Region"],["abc","Measure Names"]];
  const measures = ["2022 Score","5 Year GDP Growth Ra...","Business Freedom","Corporate Tax Rate (%)","FDI Inflow (Millions)","Financial Freedom","Fiscal Health","GDP (Billions)","GDP Growth Rate (%)","GDP per Capita (PPP)","Government Integrity","Govt Expenditure % of ...","Govt Spending","Income Tax Rate (%)","Inflation (%)","Investment Freedom","Judical Effectiveness","Labor Freedom","Monetary Freedom"];
  const row = (icon, name, tone) => `<div class="h-[21px] flex items-center pl-[20px]"><span class="w-[27px] flex items-center ${tone}">${icon === "abc" ? '<span class="text-[9px] font-semibold pl-px pt-px">Abc</span>' : `<svg class="size-3 ml-[3px] mt-px"><use href="#${icon}"/></svg>`}</span><span class="${name === "Measure Names" ? "italic tracking-[-0.35px]" : name.endsWith("...") ? "tracking-[-0.24px]" : ""}">${name}</span></div>`;
  document.getElementById("fields").innerHTML =
    dims.map(([i, n]) => row(i, n, "text-[#2f7795]")).join("") +
    '<div class="h-px bg-[#d4d4d4] ml-[15px] mr-[7px] mt-px"></div>' +
    measures.map(n => row("hash", n, "text-[#2f9b78]")).join("");
</script>
</body>
</html>
